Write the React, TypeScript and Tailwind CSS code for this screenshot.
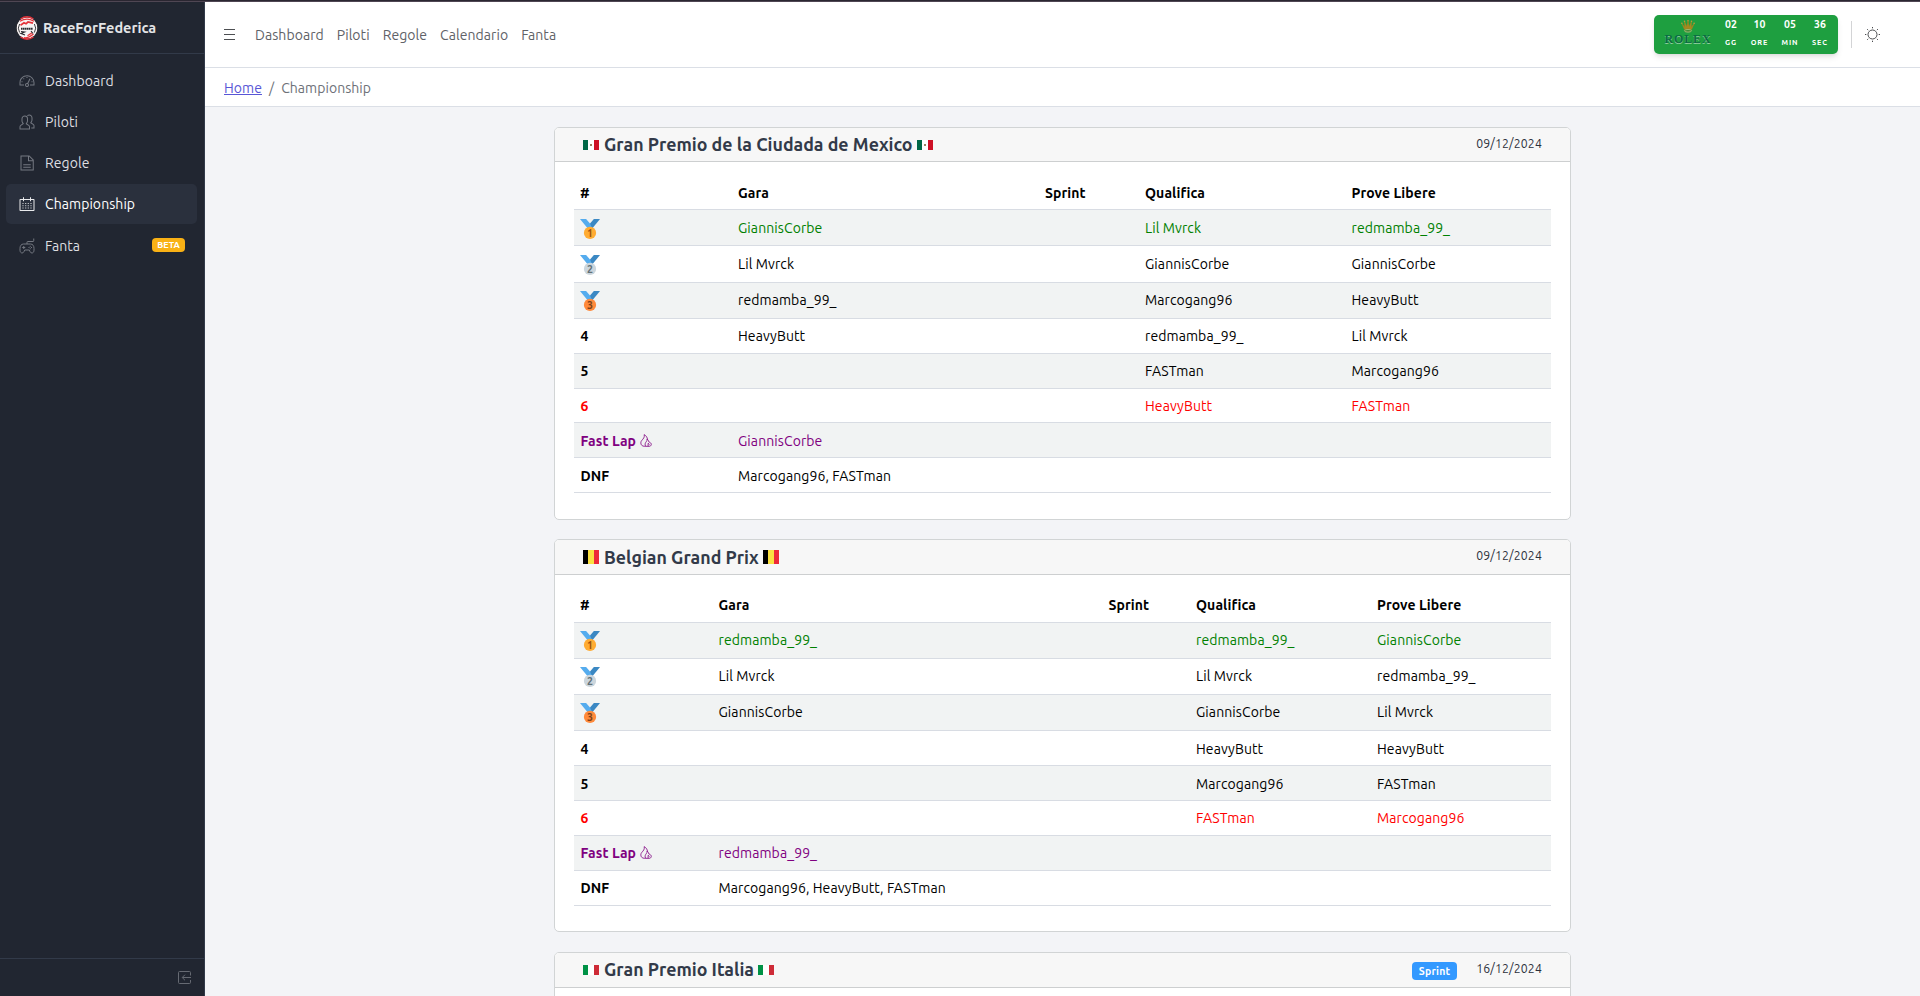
import type { ReactNode } from "react";

type Row = { pos: string; cells: string[]; tone?: "green" | "red" | "purple"; h: string };

const tones = {
  green: "text-[#008000]",
  red: "text-[#ff0000]",
  purple: "text-[#800080]",
};

function Medal({ place }: { place: number }) {
  const fill = ["#ffac33", "#ccd6dd", "#ff8a3b"][place - 1];
  const ink = ["#9e520c", "#627077", "#7c4119"][place - 1];
  return (
    <svg viewBox="0 0 36 36" className="mt-px -ml-px size-5 shrink-0">
      <path d="M18 8l-7-8H0l14 17 11.5-4.8z" fill="#55acee" />
      <path d="M18 8l7-8h11L22 17z" fill="#3b88c3" />
      <circle cx="18" cy="25" r="11" fill={fill} />
      <text x="18" y="31.500" textAnchor="middle" fontSize="19" fontWeight="700" fill={ink} fontFamily="Ubuntu, Noto Sans, sans-serif">
        {place}
      </text>
    </svg>
  );
}

function Flame() {
  return (
    <svg viewBox="0 0 12 13" className="mt-[3px] ml-1 h-[13px] w-3 shrink-0" fill="none" stroke="currentColor" strokeWidth="0.8">
      <path d="M5.600 12.300H4.400C2.200 12.300.8 10.800.8 8.900c0-2.200 2-3.200 3-5C4.400 2.800 4.400 1.800 4.200.6c2.200 1.300 3.200 3 3.300 5" />
      <path d="M5.600 12.300c-1-1.800-.4-3.300.6-4.500.7-.8 1-1.700.8-2.900 1.300 1 1.700 2 1.800 3.100 1.600.4 2.500 1.300 2.500 2.400 0 1.200-1 1.900-2.300 1.900z" />
      <path d="M8.100 12.300V9.300M8.100 9.300l1.400 1.200" />
    </svg>
  );
}

function Flag({ country }: { country: "mx" | "be" | "it" }) {
  const c = { mx: ["#006847", "#ffffff", "#ce1126"], be: ["#000000", "#fae042", "#ed2939"], it: ["#009246", "#ffffff", "#ce2b37"] }[country];
  const h = country === "be" ? 14 : 10;
  return (
    <svg width="16" height={h} viewBox={`0 0 16 ${h}`} className="shrink-0" shapeRendering="crispEdges">
      <rect width="5" height={h} fill={c[0]} />
      <rect x="5" width="6" height={h} fill={c[1]} />
      <rect x="11" width="5" height={h} fill={c[2]} />
      {country === "mx" && <path d="M7.200 4h1.800v1.500H7.200z" fill="#9a8260" />}
    </svg>
  );
}

function Card({ title, country, date, sprint, head, bottom, children }: {
  title: string; country: "mx" | "be" | "it"; date: string; sprint?: boolean; head: string; bottom: string; children?: ReactNode;
}) {
  return (
    <section className={`w-[1017px] shrink-0 rounded-[5px] border border-[#d1d4d5] bg-white ${bottom}`}>
      <header className={`flex items-center justify-between rounded-t-[4px] border-b border-[#cdcfd0] bg-[#f7f7f7] px-7 ${head}`}>
        <h2 className="flex items-center text-[17.8px] leading-[21px] font-bold text-[#323a49]">
          <Flag country={country} />
          <span className="mr-1 ml-[5px]">{title}</span>
          <Flag country={country} />
        </h2>
        <div className="flex items-center gap-[19px]">
          {sprint && <span className="mt-0.5 rounded-[4px] bg-[#3399ff] px-[7px] text-[10.5px] leading-[18px] font-bold tracking-[0.2px] text-white">Sprint</span>}
          <span className="mb-0.5 text-[12.25px] leading-[18px] tracking-[0.15px] text-[#2b303b]">{date}</span>
        </div>
      </header>
      {children}
    </section>
  );
}

function Standings({ cols, headH, rows }: { cols: string; headH: string; rows: Row[] }) {
  return (
    <div className="mx-[19px] mt-[13px] tracking-[0.09px] text-black">
      <div className={`grid border-b border-[#d8dce3] leading-[21px] font-bold ${cols} ${headH}`}>
        {["#", "Gara", "Sprint", "Qualifica", "Prove Libere"].map((t) => (
          <div key={t} className="px-[7px] first:pl-[6px]">{t}</div>
        ))}
      </div>
      {rows.map((r, i) => (
        <div key={r.pos} className={`grid border-b border-[#d8dce3] leading-[21px] ${cols} ${r.h} ${i % 2 ? "bg-white" : "bg-[#f1f3f3]"} ${r.tone ? tones[r.tone] : ""}`}>
          <div className="flex pr-[7px] pl-[6.500px] font-bold">
            {i < 3 ? <Medal place={i + 1} /> : r.pos}
            {r.pos === "Fast Lap" && <Flame />}
          </div>
          {r.cells.map((c, j) => (
            <div key={j} className="px-[7px] whitespace-nowrap">{c}</div>
          ))}
        </div>
      ))}
    </div>
  );
}

const mexico: Row[] = [
  { pos: "1", cells: ["GiannisCorbe", "", "Lil Mvrck", "redmamba_99_"], tone: "green", h: "h-[36px] pt-2" },
  { pos: "2", cells: ["Lil Mvrck", "", "GiannisCorbe", "GiannisCorbe"], h: "h-[37px] pt-2" },
  { pos: "3", cells: ["redmamba_99_", "", "Marcogang96", "HeavyButt"], h: "h-[36px] pt-[7px]" },
  { pos: "4", cells: ["HeavyButt", "", "redmamba_99_", "Lil Mvrck"], h: "h-[35px] pt-[7px]" },
  { pos: "5", cells: ["", "", "FASTman", "Marcogang96"], h: "h-[35px] pt-[7px]" },
  { pos: "6", cells: ["", "", "HeavyButt", "FASTman"], tone: "red", h: "h-[34px] pt-[7px]" },
  { pos: "Fast Lap", cells: ["GiannisCorbe", "", "", ""], tone: "purple", h: "h-[35px] pt-2" },
  { pos: "DNF", cells: ["Marcogang96, FASTman", "", "", ""], h: "h-[35px] pt-2" },
];

const belgium: Row[] = [
  { pos: "1", cells: ["redmamba_99_", "", "redmamba_99_", "GiannisCorbe"], tone: "green", h: "h-[36px] pt-[7px]" },
  { pos: "2", cells: ["Lil Mvrck", "", "Lil Mvrck", "redmamba_99_"], h: "h-[36px] pt-[7px]" },
  { pos: "3", cells: ["GiannisCorbe", "", "GiannisCorbe", "Lil Mvrck"], h: "h-[36px] pt-[7px]" },
  { pos: "4", cells: ["", "", "HeavyButt", "HeavyButt"], h: "h-[35px] pt-2" },
  { pos: "5", cells: ["", "", "Marcogang96", "FASTman"], h: "h-[35px] pt-2" },
  { pos: "6", cells: ["", "", "FASTman", "Marcogang96"], tone: "red", h: "h-[35px] pt-[7px]" },
  { pos: "Fast Lap", cells: ["redmamba_99_", "", "", ""], tone: "purple", h: "h-[35px] pt-[7px]" },
  { pos: "DNF", cells: ["Marcogang96, HeavyButt, FASTman", "", "", ""], h: "h-[35px] pt-[7px]" },
];

function Icon({ children }: { children: ReactNode }) {
  return <svg viewBox="0 0 512 512" className="size-4 shrink-0" fill="currentColor">{children}</svg>;
}

const icons = {
  speed: (
    <Icon>
      <path d="M425.706 142.294A240 240 0 0 0 16 312v88h144v-32H48v-56c0-114.691 93.309-208 208-208s208 93.309 208 208v56H352v32h144v-88a238.432 238.432 0 0 0-70.294-169.706Z" />
      <path d="M80 264h32v32H80zM240 128h32v32h-32zM136 168h32v32h-32zM400 264h32v32h-32z" />
      <path d="m297.222 335.1 69.2-144.173-28.85-13.848-69.183 144.135a64.141 64.141 0 1 0 28.833 13.886ZM256 416a32 32 0 1 1 32-32 32.036 32.036 0 0 1-32 32Z" />
    </Icon>
  ),
  people: (
    <Icon>
      <path d="m462.541 316.3-64.344-42.1 24.774-45.418A79.124 79.124 0 0 0 432.093 192v-72A103.941 103.941 0 0 0 257.484 43.523L279.232 67a71.989 71.989 0 0 1 120.861 53v72a46.809 46.809 0 0 1-5.215 21.452L355.962 284.8l89.058 58.274a42.16 42.16 0 0 1 19.073 35.421V432h-72v32h104v-85.506a74.061 74.061 0 0 0-33.552-62.194Z" />
      <path d="m318.541 348.3-64.343-42.1 24.773-45.418A79.124 79.124 0 0 0 288.093 224v-72A104.212 104.212 0 0 0 184.04 47.866C126.723 47.866 80.093 94.581 80.093 152v72a78 78 0 0 0 9.015 36.355l24.337 45.822-64.112 41.951a74.022 74.022 0 0 0-33.24 61.99V496h336v-85.506a74.061 74.061 0 0 0-33.552-62.194ZM320.093 464h-272v-53.882a42.176 42.176 0 0 1 18.9-35.234l90.6-59.283L117.366 245.350A46 46 0 0 1 112.093 224v-72a72 72 0 1 1 144 0v72a46.809 46.809 0 0 1-5.215 21.452L211.962 316.800l89.058 58.274a42.16 42.16 0 0 1 19.073 35.421Z" />
    </Icon>
  ),
  doc: (
    <Icon>
      <path d="M334.627 16H48v480h424V153.373ZM440 166.627V168H320V48h1.373ZM80 464V48h208v152h152v264Z" />
      <path d="M136 296h240v32H136zM136 376h240v32H136z" />
    </Icon>
  ),
  calendar: (
    <Icon>
      <path d="M472 96h-88V40h-32v56H160V40h-32v56H40a24.028 24.028 0 0 0-24 24v336a24.028 24.028 0 0 0 24 24h432a24.028 24.028 0 0 0 24-24V120a24.028 24.028 0 0 0-24-24Zm-8 352H48V128h80v40h32v-40h192v40h32v-40h80Z" />
      <path d="M112 224h32v32h-32zM200 224h32v32h-32zM280 224h32v32h-32zM368 224h32v32h-32zM112 296h32v32h-32zM200 296h32v32h-32zM280 296h32v32h-32zM368 296h32v32h-32zM112 368h32v32h-32zM200 368h32v32h-32zM280 368h32v32h-32zM368 368h32v32h-32z" />
    </Icon>
  ),
  gamepad: (
    <Icon>
      <g fill="none" stroke="currentColor" strokeWidth="32">
        <path d="M256 192v-56q0-24 24-24h168q24 0 24-24V16" />
        <path d="M144 192h224c72 0 112 60 112 140v60c0 52-30 88-66 88-26 0-46-16-58-40l-26-56H182l-26 56c-12 24-32 40-58 40-36 0-66-36-66-88v-60c0-80 40-140 112-140Z" />
        <path d="M104 304h96M152 256v96" />
      </g>
      <path d="M344 248h32v32h-32zM344 328h32v32h-32zM304 288h32v32h-32zM384 288h32v32h-32z" />
    </Icon>
  ),
};

const nav: { label: string; icon: keyof typeof icons; beta?: boolean }[] = [
  { label: "Dashboard", icon: "speed" },
  { label: "Piloti", icon: "people" },
  { label: "Regole", icon: "doc" },
  { label: "Championship", icon: "calendar" },
  { label: "Fanta", icon: "gamepad", beta: true },
];

function Logo() {
  return (
    <svg viewBox="0 0 24 24" className="size-6 shrink-0" fill="none">
      <circle cx="12" cy="12" r="10.500" fill="#f8f4f4" />
      <g stroke="#e5333a" strokeWidth="1.300">
        <path d="M5.500 3Q12-1.500 18.500 3M5 5.300Q12 1 19 5.300" />
        <path d="M5.500 21Q12 25.500 18.500 21M9 21.700Q13 22.500 18.500 18M12.500 19.800l4.500-3" />
        <path d="M5.500 9.300 9 6.800l2 1 2-1.800 5 1.200" strokeWidth="1.700" />
      </g>
      <g stroke="#2a2b30" strokeWidth=".9">
        <path d="M3 5.500Q-1 12 3 18.500M4.600 8Q2 12 4.600 16.500M21 5.500Q25 12 21 18.500M19.400 8Q22 12 19.400 16.500" />
        <path d="M6 12.700h12" strokeWidth="1.900" strokeDasharray="1.600 .4" />
        <path d="M6 15.500l3.500.5L6 17.500l4 1.500M16 15l2 2.500" strokeWidth="1.200" />
      </g>
    </svg>
  );
}

function Crown() {
  return (
    <svg viewBox="0 0 14 13" className="h-[13px] w-3.5">
      <path d="M3.500 9.500.8 3.500l3 3.800L3.600 1.500l2.200 5.300L7 .8l1.200 6 2.200-5.300-.2 5.800 3-3.800-2.700 6Q7 8.200 3.500 9.500Z" fill="#a8871f" stroke="#a8871f" strokeWidth=".5" />
      <g fill="#c79a3a"><circle cx=".9" cy="3.200" r=".8" /><circle cx="3.500" cy="1.300" r=".8" /><circle cx="7" cy=".8" r=".8" /><circle cx="10.500" cy="1.300" r=".8" /><circle cx="13.100" cy="3.200" r=".8" /></g>
      <ellipse cx="7" cy="10.800" rx="3.500" ry="1.300" fill="#3b8a36" stroke="#d9c48a" strokeWidth=".7" />
    </svg>
  );
}

const countdown = [
  { n: "02", l: "GG", w: "w-[26px]" },
  { n: "10", l: "ORE", w: "w-[31px]" },
  { n: "05", l: "MIN", w: "w-[30px]" },
  { n: "36", l: "SEC", w: "w-[30px]" },
];

export default function App() {
  return (
    <div className="flex h-[996px] w-[1920px] flex-col overflow-hidden bg-[#f3f4f7] font-['Ubuntu','Noto_Sans',sans-serif] text-[14px] leading-[21px]">
      <div className="h-0.5 shrink-0 border-b border-[#4f4653] bg-[#2a2631]" />
      <div className="flex min-h-0 flex-1">
        <aside className="flex w-[205px] shrink-0 flex-col border-r border-[#323a49] bg-[#212631]">
          <div className="flex h-[52px] shrink-0 items-center gap-1 border-b border-[#323a49] pl-[15px] text-[14.5px] font-bold text-[#e3e4e6]">
            <Logo />
            <span>RaceForFederica</span>
          </div>
          <nav className="flex flex-1 flex-col gap-px px-1.5 pt-[7px] tracking-[0.07px]">
            {nav.map((n) => {
              const active = n.label === "Championship";
              return (
                <a key={n.label} className={`flex h-10 w-[191px] items-center gap-2.5 rounded-[5px] px-[13px] ${active ? "mb-px bg-[#2a303d] text-white" : "text-[#dedfe1]"}`}>
                  <span className={active ? "text-[#e9eaec]" : "text-[#747881]"}>{icons[n.icon]}</span>
                  <span>{n.label}</span>
                  {n.beta && <span className="-mr-px mb-0.5 ml-auto w-[33px] rounded-[4px] bg-[#f9b115] text-center text-[9px] leading-[14px] font-bold text-white">BETA</span>}
                </a>
              );
            })}
          </nav>
          <div className="flex h-[38px] shrink-0 items-center justify-end border-t border-[#323a49] pr-[13px] text-[#666a73]">
            <svg viewBox="0 0 13 13" className="mb-px size-[13px]" fill="none" stroke="currentColor">
              <path d="M12.500 4.500V1.500q0-1-1-1h-10q-1 0-1 1v10q0 1 1 1h10q1 0 1-1V9M13 6.500H4.500M7 3.700 4.200 6.500 7 9.300" />
            </svg>
          </div>
        </aside>
        <div className="flex min-w-0 flex-1 flex-col">
          <header className="flex h-[66px] shrink-0 items-center border-b border-[#dbdfe6] bg-white pl-[19px] text-[#606267]">
            <svg viewBox="0 0 11 11" className="mb-px size-[11px]" stroke="#4d4f52" shapeRendering="crispEdges">
              <path d="M0 .5h11M0 5.500h11M0 10.500h11" />
            </svg>
            <nav className="mt-px ml-5 flex gap-[13px] tracking-[0.06px]">
              <a>Dashboard</a><a>Piloti</a><a>Regole</a><a>Calendario</a><a>Fanta</a>
            </nav>
            <div className="ml-auto flex h-[39px] w-[184px] rounded-[5px] bg-[#1e9f40] pl-[10px] font-bold text-white shadow-md">
              <div className="flex w-12 flex-col items-center pt-[5px]">
                <Crown />
                <span className="mt-px font-['Liberation_Serif',serif] text-[12px] leading-[10px] tracking-[0.900px] text-[#0b6a44] [text-shadow:0_1px_0_#8fcf9c]">ROLEX</span>
              </div>
              <div className="ml-1.5 flex">
                {countdown.map((c) => (
                  <div key={c.l} className={`flex flex-col items-center ${c.w}`}>
                    <span className="pt-px text-[10.500px] leading-4">{c.n}</span>
                    <span className="mt-0.5 text-[7.300px] leading-4 tracking-[0.900px]">{c.l}</span>
                  </div>
                ))}
              </div>
            </div>
            <div className="ml-[13px] h-[27px] w-px bg-[#d3d4d6]" />
            <svg viewBox="0 0 15 15" className="mr-10 mb-px ml-[13px] size-[15px]" fill="none" stroke="#4a4c4f">
              <circle cx="7.500" cy="7.500" r="4.500" strokeWidth="1" />
              <path d="M7.500 0v1.300M7.500 13.700V15M0 7.500h1.300M13.700 7.500H15M2.200 2.200l1 1M11.900 11.900l1 1M2.200 12.800l1-1M11.900 3.100l1-1" />
            </svg>
          </header>
          <div className="flex h-[39px] shrink-0 items-center gap-[7px] border-b border-[#dbdfe6] bg-white pt-0.5 pl-[19px] tracking-[0.05px] text-[#6d7178]">
            <a className="text-[#5856d6] underline">Home</a>
            <span>/</span>
            <span>Championship</span>
          </div>
          <main className="flex min-h-0 flex-1 flex-col gap-[19px] overflow-hidden pt-5 pl-[349px]">
            <Card title="Gran Premio de la Ciudada de Mexico" country="mx" date="09/12/2024" head="h-[34px]" bottom="h-[393px]">
              <Standings cols="grid-cols-[157px_307px_100px_206.500px_206.500px]" headH="h-[35px] pt-2" rows={mexico} />
            </Card>
            <Card title="Belgian Grand Prix" country="be" date="09/12/2024" head="h-[35px]" bottom="h-[393px]">
              <Standings cols="grid-cols-[137.5px_390px_87.500px_181px_181px]" headH="h-[35px] pt-[7px]" rows={belgium} />
            </Card>
            <Card title="Gran Premio Italia" country="it" date="16/12/2024" sprint head="h-[35px] pb-px" bottom="h-[393px] mt-px" />
          </main>
        </div>
      </div>
    </div>
  );
}
